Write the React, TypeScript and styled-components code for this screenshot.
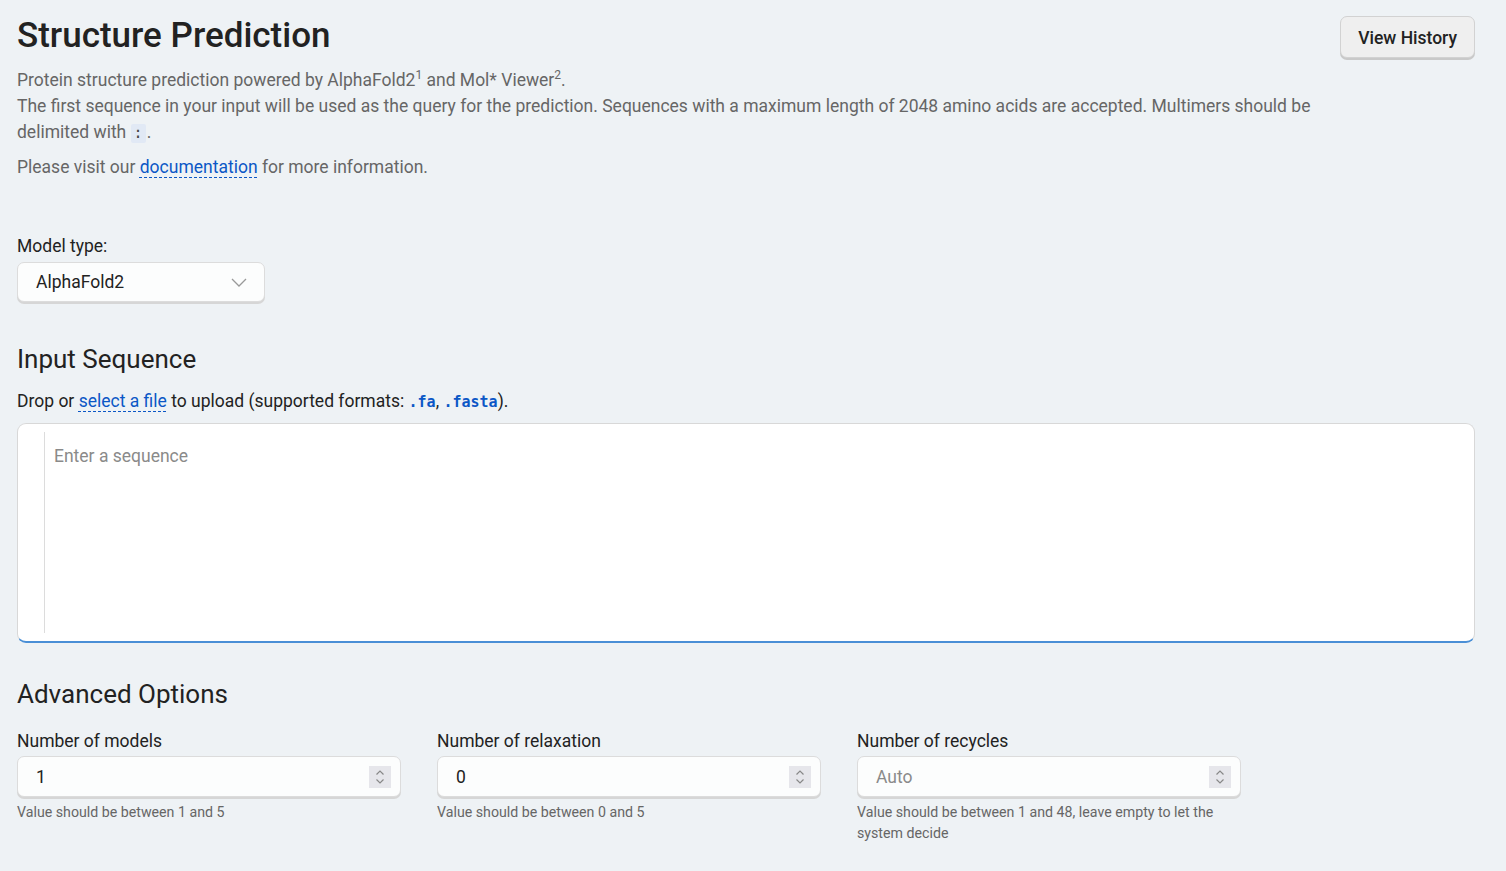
import styled, { createGlobalStyle } from 'styled-components';

const GlobalStyle = createGlobalStyle`
  html, body {
    margin: 0;
    padding: 0;
    background: #eef2f5;
    font-family: Roboto, "Noto Sans", sans-serif;
    color: #222;
  }
`;

const Page = styled.div`
  padding: 15px 31px 20px 17px;
`;

const Header = styled.div`
  display: flex;
  justify-content: space-between;
  align-items: flex-start;
`;

const Intro = styled.div`
  max-width: 1315px;
`;

const Title = styled.h1`
  margin: 0 0 10px;
  font-size: 35px;
  font-weight: 500;
  line-height: 42px;
  color: #222;
`;

const Text = styled.p<{ $gap?: number }>`
  margin: 0 0 ${(p) => p.$gap ?? 0}px;
  font-size: 17.5px;
  line-height: 26px;
  color: #666;
  sup {
    font-size: 12px;
    line-height: 0;
  }
`;

const Code = styled.code`
  display: inline-block;
  font-family: "DejaVu Sans Mono", monospace;
  font-size: 15px;
  line-height: 19px;
  background: #e1e9f5;
  color: #444;
  padding: 0 3px;
  margin-right: 1px;
  border-radius: 2px;
`;

const Link = styled.a`
  color: #0b57c6;
  text-decoration: underline dashed;
  text-underline-offset: 4px;
  text-decoration-thickness: 1px;
`;

const HistoryButton = styled.button`
  margin-top: 1px;
  padding: 2px 17px 0;
  height: 42px;
  font-family: Roboto, sans-serif;
  font-size: 17.5px;
  font-weight: 500;
  color: #222;
  background: #efefef;
  border: 1px solid #d2d2d2;
  border-radius: 7px;
  box-shadow: 0 2px 0 #c9c9c9;
`;

const Field = styled.div<{ $top?: number }>`
  margin-top: ${(p) => p.$top ?? 0}px;
  display: flex;
  flex-direction: column;
`;

const Label = styled.label<{ $gap?: number }>`
  font-size: 17.5px;
  line-height: 22px;
  color: #222;
  margin-bottom: ${(p) => p.$gap ?? 4}px;
`;

const Select = styled.div`
  width: 248px;
  height: 40px;
  box-sizing: border-box;
  display: flex;
  align-items: center;
  justify-content: space-between;
  padding: 0 16px 0 18px;
  background: #fcfdfd;
  border: 1px solid #dcdcdc;
  border-radius: 7px;
  box-shadow: 0 2px 0 #d6d6d6;
  font-size: 17.5px;
  color: #222;
`;

const Heading = styled.h2<{ $top: number }>`
  margin: ${(p) => p.$top}px 0 0;
  font-size: 26px;
  font-weight: 400;
  line-height: 32px;
  color: #222;
`;

const DropLine = styled.p`
  margin: 13px 0 8px;
  font-size: 17.5px;
  line-height: 26px;
  color: #222;
`;

const FileCode = styled.code`
  font-family: "DejaVu Sans Mono", monospace;
  font-size: 15px;
  font-weight: 600;
  color: #0b57c6;
`;

const Editor = styled.div`
  height: 220px;
  box-sizing: border-box;
  background: #fff;
  border: 1px solid #d8d8d8;
  border-bottom: 2px solid #4a8fd6;
  border-radius: 9px;
  display: flex;
  padding: 8px 0 8px 26px;
`;

const Gutter = styled.div`
  width: 1px;
  background: #dcdcdc;
`;

const Placeholder = styled.div`
  padding: 14px 0 0 9px;
  font-size: 17.5px;
  color: #8a8a8a;
`;

const Options = styled.div`
  margin-top: 20px;
  display: grid;
  grid-template-columns: repeat(3, 384px);
  column-gap: 36px;
`;

const NumberBox = styled.div`
  height: 41px;
  box-sizing: border-box;
  display: flex;
  align-items: center;
  justify-content: space-between;
  padding: 0 9px 0 18px;
  background: #fcfdfd;
  border: 1px solid #dcdcdc;
  border-radius: 7px;
  box-shadow: 0 2px 0 #d6d6d6;
`;

const Value = styled.span<{ $muted?: boolean }>`
  font-size: 17.5px;
  color: ${(p) => (p.$muted ? '#8a8a8a' : '#222')};
`;

const Spinner = styled.div`
  width: 22px;
  height: 22px;
  background: #e6e6eb;
  display: flex;
  align-items: center;
  justify-content: center;
`;

const Help = styled.div`
  margin-top: 5px;
  font-size: 14.2px;
  line-height: 21px;
  color: #666;
`;

const Chevron = () => (
  <svg width="18" height="18" viewBox="0 0 18 18" fill="none">
    <path d="M2 6l7 7 7-7" stroke="#999" strokeWidth="1.3" />
  </svg>
);

const Arrows = () => (
  <svg width="12" height="18" viewBox="0 0 12 18" fill="none">
    <path d="M2.5 6.5L6 3l3.5 3.5M2.5 11.5L6 15l3.5-3.5" stroke="#888" strokeWidth="1.2" />
  </svg>
);

const options = [
  { label: 'Number of models', value: '1', help: 'Value should be between 1 and 5' },
  { label: 'Number of relaxation', value: '0', help: 'Value should be between 0 and 5' },
  {
    label: 'Number of recycles',
    value: 'Auto',
    muted: true,
    help: 'Value should be between 1 and 48, leave empty to let the system decide',
  },
];

const App = () => {
  return (
    <Page>
      <GlobalStyle />
      <Header>
        <Intro>
          <Title>Structure Prediction</Title>
          <Text>
            Protein structure prediction powered by AlphaFold2<sup>1</sup> and Mol* Viewer<sup>2</sup>.
          </Text>
          <Text $gap={9}>
            The first sequence in your input will be used as the query for the prediction. Sequences with a
            maximum length of 2048 amino acids are accepted. Multimers should be delimited with <Code>:</Code>.
          </Text>
          <Text>
            Please visit our <Link href="#">documentation</Link> for more information.
          </Text>
        </Intro>
        <HistoryButton>View History</HistoryButton>
      </Header>

      <Field $top={55}>
        <Label $gap={5}>Model type:</Label>
        <Select>
          <span>AlphaFold2</span>
          <Chevron />
        </Select>
      </Field>

      <Heading $top={41}>Input Sequence</Heading>
      <DropLine>
        Drop or <Link href="#">select a file</Link> to upload (supported formats: <FileCode>.fa</FileCode>,{' '}
        <FileCode>.fasta</FileCode>).
      </DropLine>
      <Editor>
        <Gutter />
        <Placeholder>Enter a sequence</Placeholder>
      </Editor>

      <Heading $top={35}>Advanced Options</Heading>
      <Options>
        {options.map((o) => (
          <Field key={o.label}>
            <Label>{o.label}</Label>
            <NumberBox>
              <Value $muted={o.muted}>{o.value}</Value>
              <Spinner>
                <Arrows />
              </Spinner>
            </NumberBox>
            <Help>{o.help}</Help>
          </Field>
        ))}
      </Options>
    </Page>
  );
};

export default App;
